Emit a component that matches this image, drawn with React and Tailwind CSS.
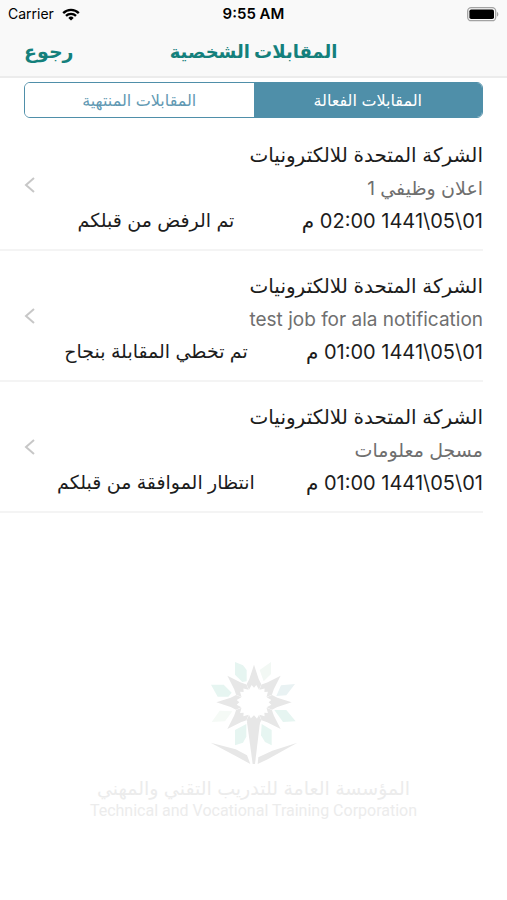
import React, { useState } from "react";

const interviews = [
  {
    id: 1,
    company: "الشركة المتحدة للالكترونيات",
    job: "اعلان وظيفي 1",
    date: "01\\05\\1441 02:00 م",
    status: "تم الرفض من قبلكم",
  },
  {
    id: 2,
    company: "الشركة المتحدة للالكترونيات",
    job: "test job for ala notification",
    date: "01\\05\\1441 01:00 م",
    status: "تم تخطي المقابلة بنجاح",
  },
  {
    id: 3,
    company: "الشركة المتحدة للالكترونيات",
    job: "مسجل معلومات",
    date: "01\\05\\1441 01:00 م",
    status: "انتظار الموافقة من قبلكم",
  },
];

const StatusBar = () => (
  <div dir="ltr" className="grid h-7 grid-cols-3 items-center px-2 text-sm text-black">
    <div className="flex items-center gap-2">
      <span>Carrier</span>
      <svg width="18" height="13" viewBox="0 0 18 13" aria-hidden="true">
        <g fill="none" stroke="#000" strokeWidth="2.3">
          <path d="M1.2 5.1a11 11 0 0 1 15.6 0" />
          <path d="M4 7.9a7.1 7.1 0 0 1 10 0" />
        </g>
        <path d="M9 12.6 6.3 9.9a3.8 3.8 0 0 1 5.4 0z" />
      </svg>
    </div>
    <span className="text-center text-[15px] font-semibold">9:55 AM</span>
    <svg className="justify-self-end" width="32" height="15" viewBox="0 0 32 15" aria-hidden="true">
      <rect x="0.7" y="0.7" width="28" height="13" rx="3.5" fill="none" stroke="#a3a3a3" strokeWidth="1.3" />
      <rect x="2.4" y="2.4" width="24.6" height="9.6" rx="1.8" fill="#000" />
      <path d="M30 5v4.6c1.8-.7 1.8-3.9 0-4.6z" fill="#a3a3a3" />
    </svg>
  </div>
);

const spikes = [0, 45, 90, 135, 180, 225, 270, 315];

const Logo = () => (
  <svg width="130" height="120" viewBox="0 0 390 360" aria-hidden="true">
    <g fill="#e6f5f1">
      <path d="M138 36 162 46 173 60v34l-13 2-22-22z" />
      <path d="M66 104h38l24 24-10 12H86z" />
      <path d="M138 240 172 222v38l-10 18-24 8z" />
      <path d="M218 222 248 240v46l-20-10-12-20z" />
      <path d="M256 180h36l28 34-38 2z" />
    </g>
    <path d="M262 138 276 106l42-4-26 34z" fill="#e9f2f3" />
    <path d="M212 60 246 36v36l-22 22z" fill="#f2f8f4" />
    <path d="M68 216 92 182l38 2-22 30z" fill="#f5faf6" />
    <g fill="#e7e7e7">
      {spikes.map((angle) => (
        <path
          key={angle}
          d="M0-113 14-70 22-54 15-38 7-52 0-44-7-52-15-38-22-54-14-70z"
          transform={`translate(195 157) rotate(${angle})`}
        />
      ))}
      <path d="M174 216 195 196 213 216 198 342h-7z" />
      <path d="M65 278 140 298 174 316 184 342 140 318z" />
      <path d="M325 278 250 302 208 322 206 342 236 328z" />
    </g>
  </svg>
);

const InterviewRow = ({ item }) => (
  <li className="mr-6 border-b-2 border-[#f4f4f4]">
    <a href={`#interview-${item.id}`} className="flex h-[129px] items-center pl-6 pt-1">
      <div className="min-w-0 flex-1">
        <h2 className="text-xl leading-9 text-[#1c1c1c]">{item.company}</h2>
        <p className="text-[19px] leading-8 text-[#6f6f6f]">{item.job}</p>
        <div className="flex leading-8 text-[#1c1c1c]">
          <span className="flex-1 whitespace-nowrap text-xl leading-8">{item.date}</span>
          <span className="w-52 whitespace-nowrap text-center text-[19px]">{item.status}</span>
        </div>
      </div>
      <svg className="mb-1 mr-4" width="12" height="18" viewBox="0 0 12 18" aria-hidden="true">
        <path d="M10 2 2 9l8 7" fill="none" stroke="#c7c7c7" strokeWidth="2" />
      </svg>
    </a>
  </li>
);

const App = () => {
  const [tab, setTab] = useState("active");

  const tabClass = (name) =>
    tab === name
      ? "flex-1 bg-[#4f8fa9] text-base text-white"
      : "flex-1 bg-white text-base text-[#6299b3]";

  return (
    <div
      dir="rtl"
      className="flex min-h-screen flex-col bg-white font-['Inter','DejaVu_Sans',sans-serif]"
    >
      <header className="border-b-2 border-[#ececec] bg-[#f9f9f9]">
        <StatusBar />
        <div className="grid h-12 grid-cols-[1fr_auto_1fr] items-center px-6 font-bold text-[#14807c]">
          <h1 className="col-start-2 text-lg">المقابلات الشخصية</h1>
          <button type="button" className="justify-self-end text-[19px]">
            رجوع
          </button>
        </div>
      </header>

      <main className="flex flex-col">
        <div className="mx-6 mt-1 flex h-9 overflow-hidden rounded-md border border-[#4f8fa9]">
          <button type="button" className={tabClass("active")} onClick={() => setTab("active")}>
            المقابلات الفعالة
          </button>
          <button type="button" className={tabClass("finished")} onClick={() => setTab("finished")}>
            المقابلات المنتهية
          </button>
        </div>
        <ul className="mt-0.5">
          {interviews.map((item) => (
            <InterviewRow key={item.id} item={item} />
          ))}
        </ul>
      </main>

      <footer className="mt-auto flex flex-col items-center pb-[78px] text-[#ececec]">
        <Logo />
        <p className="mt-2 text-[19px] leading-[22px]">المؤسسة العامة للتدريب التقني والمهني</p>
        <p dir="ltr" className="font-['Roboto',sans-serif] text-base leading-[22px]">
          Technical and Vocational Training Corporation
        </p>
      </footer>
    </div>
  );
};

export default App;
